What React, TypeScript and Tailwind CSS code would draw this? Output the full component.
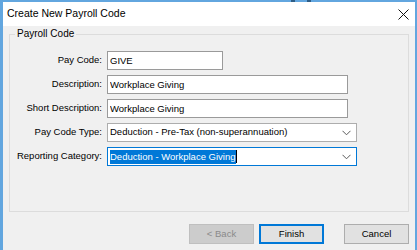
import type { ReactNode } from 'react';

const font = { fontFamily: "'Liberation Sans', Arial, sans-serif" };

function Chevron() {
  return (
    <svg width="9" height="6" viewBox="0 0 9 6" aria-hidden>
      <path d="M0.5 0.8 L4.5 4.8 L8.5 0.8" fill="none" stroke="#5a5a5a" strokeWidth="1" />
    </svg>
  );
}

function Row({ label, children }: { label: string; children: ReactNode }) {
  return (
    <>
      <label className="flex h-[19px] items-center justify-end whitespace-nowrap">{label}</label>
      <div className="flex h-[19px] items-center">{children}</div>
    </>
  );
}

function TextBox({ value, width }: { value: string; width: string }) {
  return (
    <input
      readOnly
      value={value}
      className={`h-[19px] ${width} border border-[#9a9a9a] bg-white px-[2px] text-[9.5px] text-black outline-none`}
      style={font}
    />
  );
}

function Combo({ children, active }: { children: ReactNode; active?: boolean }) {
  return (
    <div
      className={`flex h-[19px] w-[250px] items-center justify-between bg-white pl-[2px] pr-[5px] ${
        active ? 'border border-[#0078d7]' : 'border border-[#adadad]'
      }`}
    >
      <div className="flex items-center">{children}</div>
      <Chevron />
    </div>
  );
}

export default function App() {
  return (
    <div
      className="relative flex h-[250px] w-[417px] flex-col border-t-2 border-r-2 border-l-[3px] border-[#62a6df] bg-[#f0f0f0] text-[9.5px] text-black"
      style={font}
    >
      <span className="absolute -top-[2px] left-[288px] h-[2px] w-[4px] bg-[#2d5d86]" />
      <span className="absolute -top-[2px] left-[304px] h-[2px] w-[4px] bg-[#2d5d86]" />

      <div className="flex h-[24px] items-center justify-between bg-white pl-[4px] pr-[6px]">
        <span className="text-[10.5px]">Create New Payroll Code</span>
        <svg width="11" height="11" viewBox="0 0 11 11" aria-hidden>
          <path d="M0.5 0.5 L10.5 10.5 M10.5 0.5 L0.5 10.5" stroke="#111" strokeWidth="1" />
        </svg>
      </div>

      <div className="flex flex-col px-[6px] pt-[2px]">
        <fieldset className="h-[184px] border border-[#dcdcdc] pl-0 pr-0 pt-[11px]">
          <legend className="ml-[5px] px-[2px] text-[10px] leading-[12px]">Payroll Code</legend>
          <div className="grid grid-cols-[92px_1fr] gap-x-[5px] gap-y-[5px]">
            <Row label="Pay Code:">
              <TextBox value="GIVE" width="w-[116px]" />
            </Row>
            <Row label="Description:">
              <TextBox value="Workplace Giving" width="w-[241px]" />
            </Row>
            <Row label="Short Description:">
              <TextBox value="Workplace Giving" width="w-[241px]" />
            </Row>
            <Row label="Pay Code Type:">
              <Combo>
                <span className="whitespace-nowrap">Deduction - Pre-Tax (non-superannuation)</span>
              </Combo>
            </Row>
            <Row label="Reporting Category:">
              <Combo active>
                <span className="whitespace-nowrap bg-[#0078d7] leading-[14px] text-white">
                  Deduction - Workplace Giving
                </span>
                <span className="h-[13px] w-px bg-black" />
              </Combo>
            </Row>
          </div>
        </fieldset>

        <div className="mt-[12px] flex justify-end">
          <button
            type="button"
            disabled
            className="h-[20px] w-[65px] border border-[#bfbfbf] bg-[#cccccc] text-[9.5px] text-[#8a8a8a]"
          >
            &lt; Back
          </button>
          <button
            type="button"
            className="ml-[5px] h-[20px] w-[65px] border-2 border-[#0078d7] bg-[#e1e1e1] text-[9.5px]"
          >
            Finish
          </button>
          <button
            type="button"
            className="ml-[20px] h-[20px] w-[65px] border border-[#adadad] bg-[#e1e1e1] text-[9.5px]"
          >
            Cancel
          </button>
        </div>
      </div>
    </div>
  );
}
